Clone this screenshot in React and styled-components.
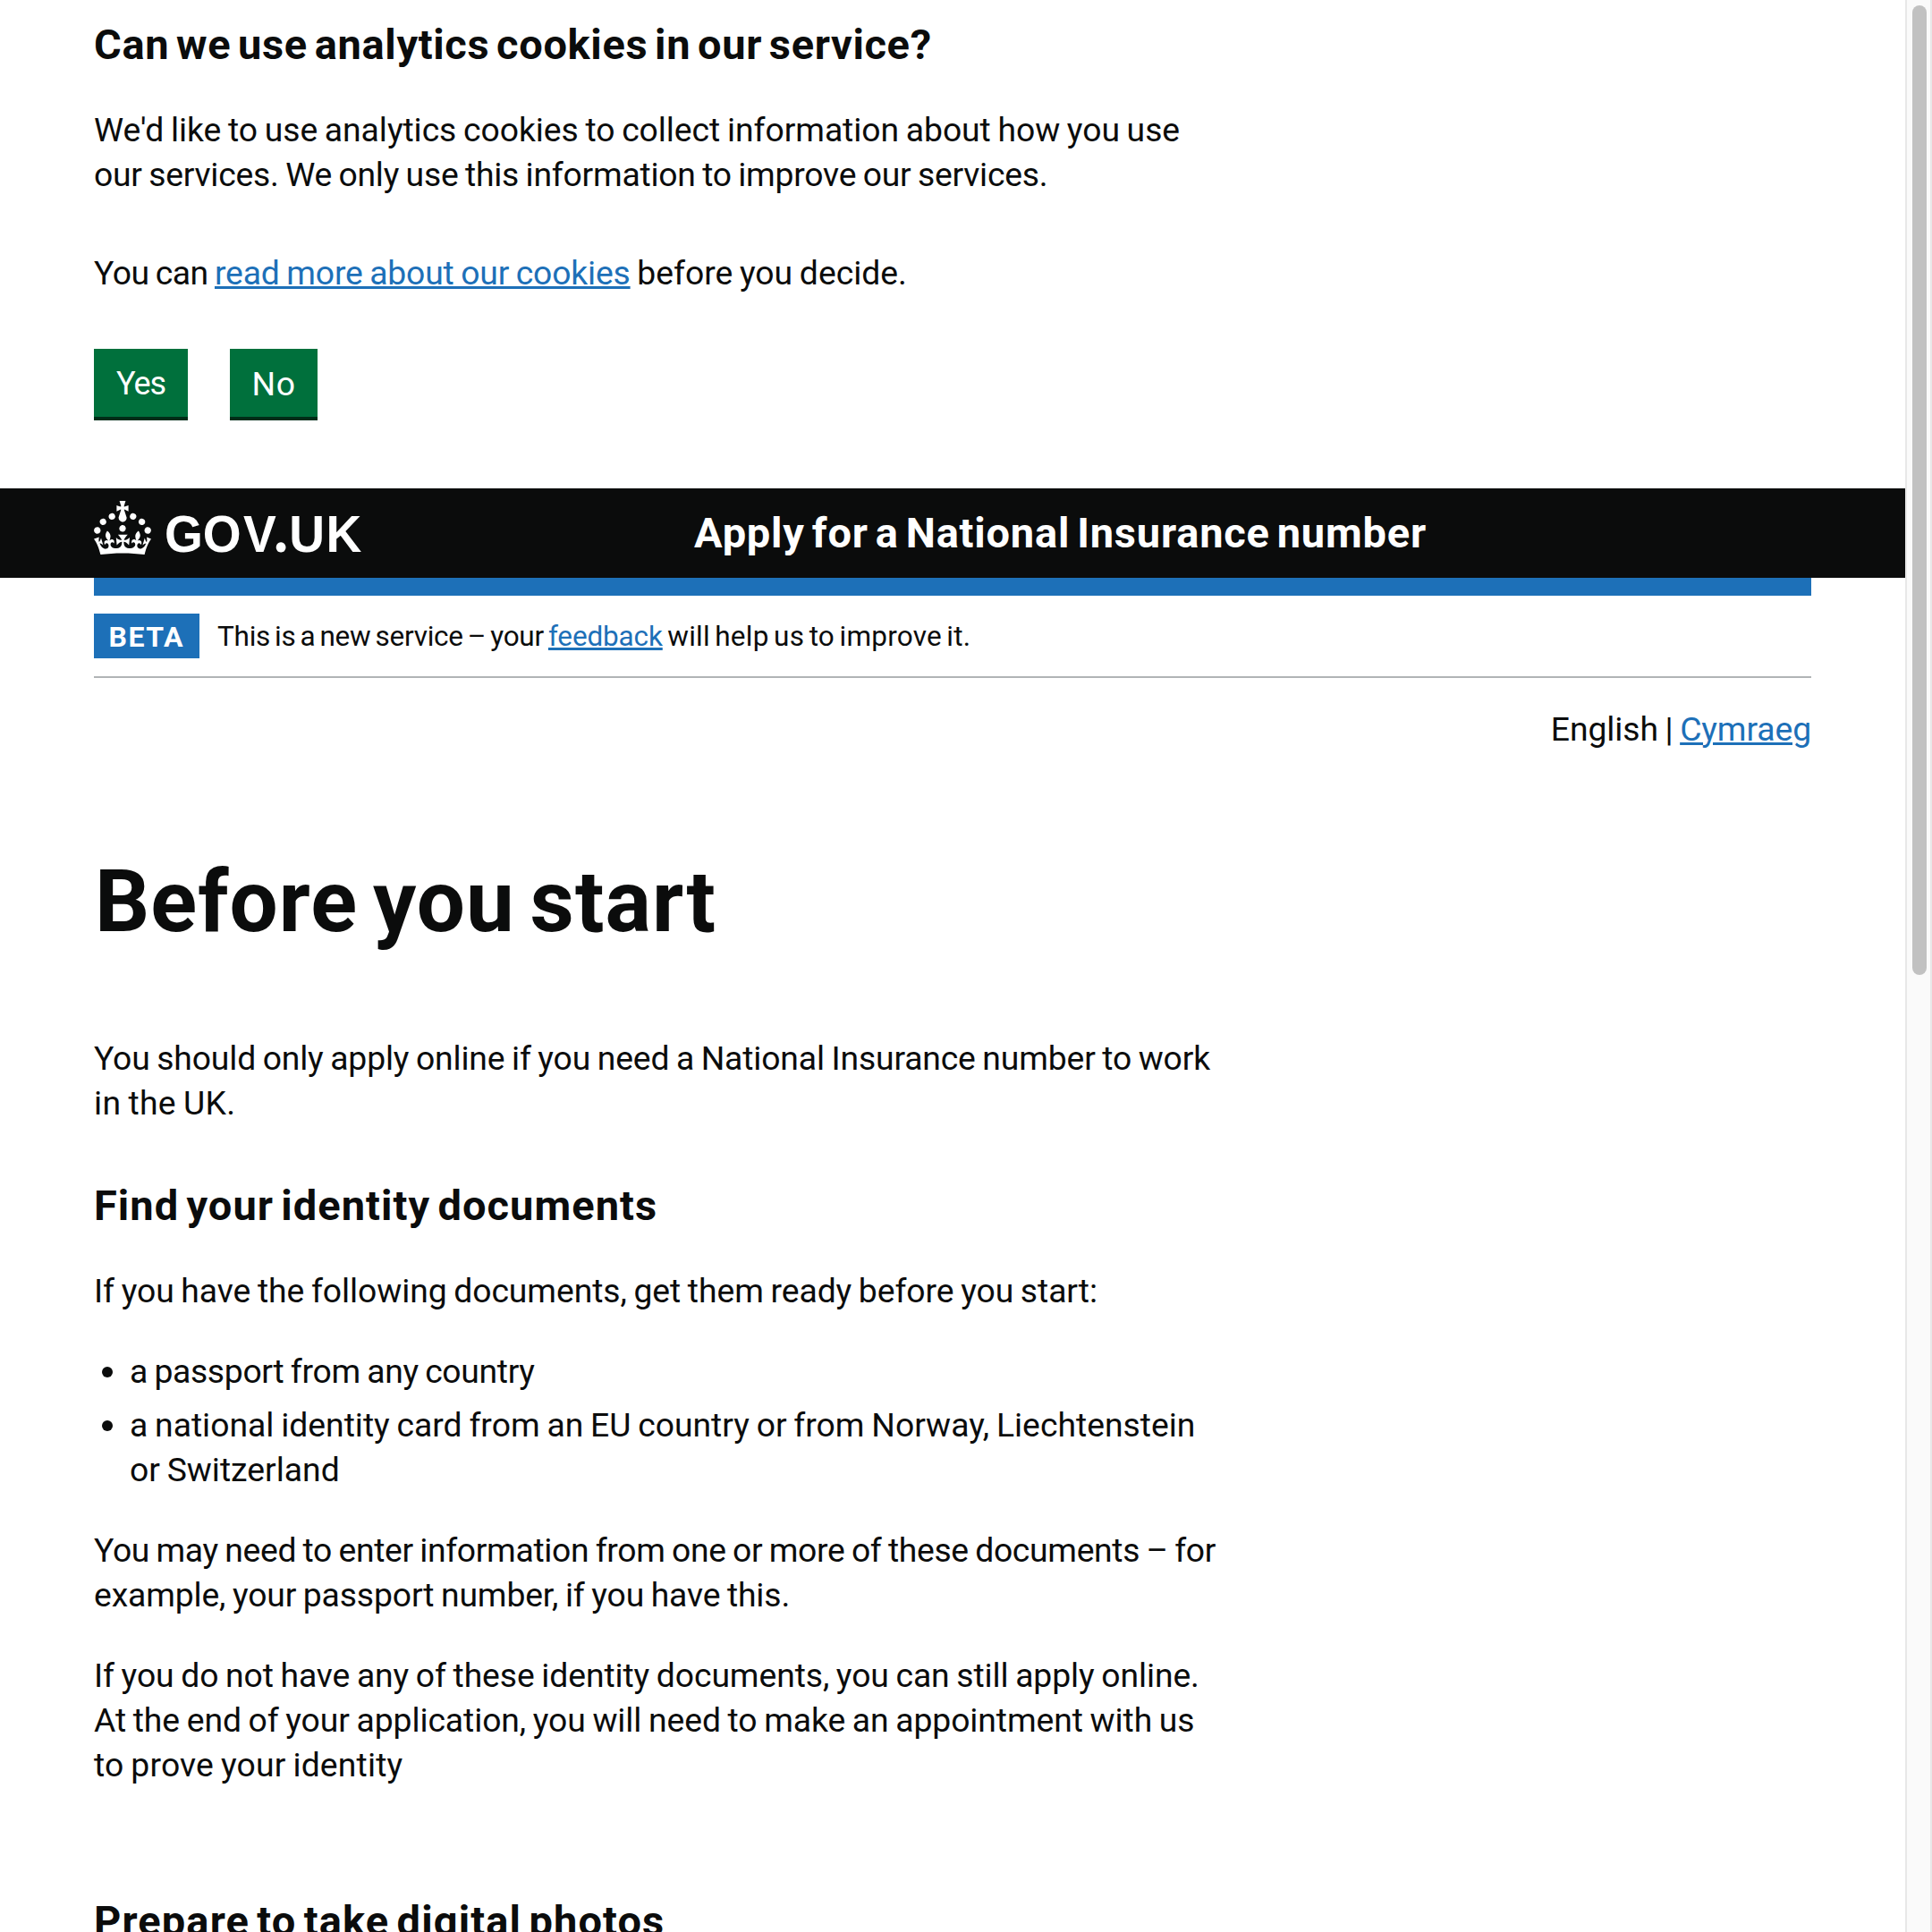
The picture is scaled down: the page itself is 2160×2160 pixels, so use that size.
import React from "react";
import styled, { createGlobalStyle } from "styled-components";

const GlobalStyle = createGlobalStyle`
  *, *::before, *::after { box-sizing: border-box; }
  html, body { margin: 0; padding: 0; overflow: hidden; background: #fff; }
  body {
    color: #0b0c0c;
    font-family: Roboto, "Noto Sans", sans-serif;
    font-size: 37.3px;
    line-height: 50px;
    word-spacing: -1.5px;
  }
`;

const Screen = styled.div`
  display: flex;
  width: 2160px;
  height: 2160px;
  overflow: hidden;
`;
const Page = styled.div`
  flex: 1;
  min-width: 0;
  height: 2160px;
  overflow: hidden;
`;
const Container = styled.div`
  width: 1920px;
  margin: 0 auto;
`;
const ScrollTrack = styled.div`
  width: 30px;
  padding: 6px 4px 0 6px;
  background: #fafafa;
  border-left: 2px solid #e8e8e8;
  border-right: 2px solid #e8e8e8;
`;
const ScrollThumb = styled.div`
  width: 16px;
  height: 1084px;
  border-radius: 8px;
  background: #c1c1c1;
`;

const Line = styled.span`
  display: block;
  white-space: nowrap;
  letter-spacing: ${(p) => p.$track || 0}px;
`;
const Run = styled.span`
  white-space: pre;
  letter-spacing: ${(p) => p.$track || 0}px;
`;
const Link = styled.a`
  color: #1d70b8;
  letter-spacing: ${(p) => p.$track || 0}px;
  text-decoration: underline;
  text-decoration-thickness: 3px;
  text-underline-offset: 2px;
`;
const Heading = styled.h2`
  margin: 0 0 40px;
  font-size: 47px;
  line-height: 60px;
  font-weight: 700;
  word-spacing: -4.5px;
`;
const Title = styled.h1`
  margin: 118px 0 100px 1px;
  font-size: 96px;
  line-height: 100px;
  font-weight: 700;
  letter-spacing: 1.05px;
  word-spacing: -8px;
`;
const Paragraph = styled.p`
  margin: 0 0 ${(p) => p.$gap || 40}px;
`;

const CookieBanner = styled.section`
  padding: 20px 0 80px;
`;
const ButtonGroup = styled.div`
  display: flex;
  gap: 47px;
`;
const Button = styled.button`
  width: ${(p) => p.$width}px;
  height: 76px;
  padding: 3px 0 0;
  border: 0;
  background: #00703c;
  box-shadow: 0 4px 0 #002d18;
  color: #fff;
  font: inherit;
  font-size: ${(p) => p.$size || 37.3}px;
  line-height: 73px;
  letter-spacing: ${(p) => p.$track || 0}px;
  text-align: center;
`;

const Header = styled.header`
  height: 100px;
  background: #0b0c0c;
  color: #fff;
`;
const HeaderRow = styled(Container)`
  display: flex;
`;
const LogoColumn = styled.div`
  display: flex;
  gap: 15px;
  width: 671px;
  padding-top: 14px;
`;
const Wordmark = styled.div`
  height: 60px;
  margin-top: 7px;
  font-family: "Liberation Sans", Arial, sans-serif;
  font-size: 58px;
  font-weight: 700;
  line-height: 60px;
  white-space: nowrap;
  transform: scaleX(0.95);
  transform-origin: 0 0;
`;
const Dot = styled.span`
  font-family: Lato, sans-serif;
  font-size: 74px;
  line-height: 0;
  letter-spacing: 1px;
`;
const ServiceName = styled.div`
  padding-top: 20px;
  font-size: 47px;
  font-weight: 700;
  line-height: 60px;
  word-spacing: -4.5px;
`;
const BlueBar = styled(Container)`
  height: 20px;
  background: #1d70b8;
`;
const PhaseBanner = styled(Container)`
  display: flex;
  gap: 20px;
  padding: 20px 0;
  border-bottom: 2px solid #b1b4b6;
`;
const Tag = styled.strong`
  width: 118px;
  height: 50px;
  padding: 1px 0 0 16.5px;
  background: #1d70b8;
  color: #fff;
  font-size: 32px;
  font-weight: 700;
  letter-spacing: 1.5px;
`;
const PhaseText = styled.div`
  height: 50px;
  padding-top: 1px;
  font-size: 31.5px;
  word-spacing: -2.5px;
  white-space: nowrap;
`;
const Languages = styled.nav`
  margin-top: 32px;
  text-align: right;
`;
const List = styled.ul`
  display: flex;
  flex-direction: column;
  gap: 10px;
  margin: 0 0 40px;
  padding: 0;
  list-style: none;
`;
const Item = styled.li`
  display: flex;
  &::before {
    content: "";
    flex: none;
    width: 12px;
    height: 12px;
    margin: 20px 19px 0 9px;
    border-radius: 50%;
    background: #0b0c0c;
  }
`;

const Crown = () => (
  <svg width="64" height="60" viewBox="0 0 32 30" fill="#fff" aria-hidden="true">
    <path
      fillRule="evenodd"
      d="M22.6 10.4c-1 .4-2-.1-2.4-1-.4-.9.1-2 1-2.4.9-.4 2 .1 2.4 1s-.1 2-1 2.4m-5.9 6.7c-.9.4-2-.1-2.4-1-.4-.9.1-2 1-2.4.9-.4 2 .1 2.4 1s-.1 2-1 2.4m10.8-3.7c-1 .4-2-.1-2.4-1-.4-.9.1-2 1-2.4.9-.4 2 .1 2.4 1s0 2-1 2.4m3.3 4.8c-1 .4-2-.1-2.4-1-.4-.9.1-2 1-2.4.9-.4 2 .1 2.4 1s-.1 2-1 2.4M17 4.7l2.3 1.2V2.5l-2.3.7-.2-.2.9-3h-3.4l.9 3-.2.2c-.1.1-2.3-.7-2.3-.7v3.4L15 4.7c.1.1.1.2.2.2l-1.3 4c-.1.2-.1.4-.1.6 0 1.1.8 2 1.9 2.2h.7c1-.2 1.9-1.1 1.9-2.1 0-.2 0-.4-.1-.6l-1.3-4c-.1-.2 0-.2.1-.3m-7.6 5.7c.9.4 2-.1 2.4-1 .4-.9-.1-2-1-2.4-.9-.4-2 .1-2.4 1s0 2 1 2.4m-5 3c.9.4 2-.1 2.4-1 .4-.9-.1-2-1-2.4-.9-.4-2 .1-2.4 1s.1 2 1 2.4m-3.2 4.8c.9.4 2-.1 2.4-1 .4-.9-.1-2-1-2.4-.9-.4-2 .1-2.4 1s0 2 1 2.4m14.8 11c4.4 0 8.6.3 12.3.8 1.1-4.5 2.4-7 3.7-8.8l-2.5-.9c.2 1.3.3 1.9 0 2.7-.4-.4-.8-1.1-1.1-2.3l-1.2 4c.7-.5 1.3-.8 2-.9-1.1 2.5-2.6 3.1-3.5 3-1.1-.2-1.7-1.2-1.5-2.1.3-1.2 1.5-1.5 2.1-.1 1.1-2.3-.8-3-2-2.3 1.9-1.9 2.1-3.5.6-5.6-2.1 1.6-2.1 3.2-1.2 5.5-1.2-1.4-3.2-.6-2.5 1.6.9-1.4 2.1-.5 1.9.8-.2 1.1-1.7 2.1-3.5 1.9-2.7-.2-2.9-2.1-2.9-3.6.7-.1 1.9.5 2.9 1.9l.4-4.3c-1.1 1.1-2.1 1.4-3.2 1.4.4-1.2 2.1-3 2.1-3h-5.4s1.7 1.9 2.1 3c-1.1 0-2.1-.2-3.2-1.4l.4 4.3c1-1.4 2.2-2 2.9-1.9-.1 1.5-.2 3.4-2.9 3.6-1.9.2-3.4-.8-3.5-1.9-.2-1.3 1-2.2 1.9-.8.7-2.3-1.2-3-2.5-1.6.9-2.2.9-3.9-1.2-5.5-1.5 2-1.3 3.7.6 5.6-1.2-.7-3.1 0-2 2.3.6-1.4 1.8-1.1 2.1.1.2.9-.3 1.9-1.5 2.1-.9.2-2.4-.5-3.5-3 .6 0 1.2.3 2 .9l-1.2-4c-.3 1.1-.7 1.9-1.1 2.3-.3-.8-.2-1.4 0-2.7l-2.9.9C1.3 23 2.6 25.5 3.7 30c3.7-.5 7.9-.8 12.3-.8"
    />
  </svg>
);

export default function App() {
  return (
    <Screen>
      <GlobalStyle />
      <Page>
        <Container>
          <CookieBanner>
            <Heading><Line $track={0.65}>Can we use analytics cookies in our service?</Line></Heading>
            <Paragraph $gap={60}>
              <Line $track={-0.05}>We'd like to use analytics cookies to collect information about how you use</Line>
              <Line $track={-0.24}>our services. We only use this information to improve our services.</Line>
            </Paragraph>
            <Paragraph $gap={60}>
              <Run $track={-0.5}>You can </Run>
              <Link $track={-0.17}>read more about our cookies</Link>
              <Run $track={-0.02}> before you decide.</Run>
            </Paragraph>
            <ButtonGroup>
              <Button $width={105} $size={36} $track={-1}>Yes</Button>
              <Button $width={98} $track={0.5}>No</Button>
            </ButtonGroup>
          </CookieBanner>
        </Container>
        <Header>
          <HeaderRow>
            <LogoColumn>
              <Crown />
              <Wordmark>
                <Run>G</Run><Run $track={2.3}>O</Run><Run $track={-3.2}>V</Run><Dot>.</Dot><Run $track={1.4}>U</Run><Run>K</Run>
              </Wordmark>
            </LogoColumn>
            <ServiceName><Line $track={0.8}>Apply for a National Insurance number</Line></ServiceName>
          </HeaderRow>
        </Header>
        <BlueBar />
        <PhaseBanner>
          <Tag>BETA</Tag>
          <PhaseText>
            <Run $track={-0.26}>This is a new service – your </Run>
            <Link $track={-0.15}>feedback</Link>
            <Run $track={0.21}> will help us to improve it.</Run>
          </PhaseText>
        </PhaseBanner>
        <Container>
          <Languages><Run $track={-0.1}>English | </Run><Link $track={-0.1}>Cymraeg</Link></Languages>
          <Title>Before you start</Title>
          <Paragraph $gap={60}>
            <Line $track={-0.15}>You should only apply online if you need a National Insurance number to work</Line>
            <Line $track={0.32}>in the UK.</Line>
          </Paragraph>
          <Heading><Line $track={1.05}>Find your identity documents</Line></Heading>
          <Paragraph>
            <Line $track={-0.07}>If you have the following documents, get them ready before you start:</Line>
          </Paragraph>
          <List>
            <Item><Line $track={-0.33}>a passport from any country</Line></Item>
            <Item>
              <div>
                <Line>a national identity card from an EU country or from Norway, Liechtenstein</Line>
                <Line>or Switzerland</Line>
              </div>
            </Item>
          </List>
          <Paragraph>
            <Line $track={-0.33}>You may need to enter information from one or more of these documents – for</Line>
            <Line $track={-0.14}>example, your passport number, if you have this.</Line>
          </Paragraph>
          <Paragraph $gap={120}>
            <Line $track={-0.09}>If you do not have any of these identity documents, you can still apply online.</Line>
            <Line $track={-0.08}>At the end of your application, you will need to make an appointment with us</Line>
            <Line $track={0.17}>to prove your identity</Line>
          </Paragraph>
          <Heading><Line $track={1.12}>Prepare to take digital photos</Line></Heading>
        </Container>
      </Page>
      <ScrollTrack><ScrollThumb /></ScrollTrack>
    </Screen>
  );
}
